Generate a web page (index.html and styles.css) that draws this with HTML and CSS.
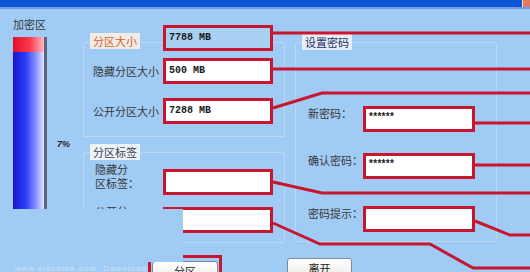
FILE: index.html
```html
<!DOCTYPE html>
<html lang="zh-CN">
<head>
    <meta charset="UTF-8">
    <meta name="viewport" content="width=device-width, initial-scale=1.0">
    <title>加密分区</title>
    <link rel="stylesheet" href="styles.css">
</head>
<body>
    <div class="titlebar"><span class="close"></span></div>

    <div class="main">
        <div class="side">
            <div class="side-label">加密区</div>
            <div class="meter-row">
                <div class="meter"><div class="meter-used"></div></div>
                <div class="percent">7%</div>
            </div>
        </div>

        <div class="mid">
            <div class="group g-size">
                <div class="row head">
                    <div class="cell"><span class="legend legend-size">分区大小</span></div>
                    <div class="mark"><div class="field field-off">7788 MB</div></div>
                </div>
                <div class="row r1">
                    <span class="row-label">隐藏分区大小</span>
                    <div class="mark"><div class="field">500 MB</div></div>
                </div>
                <div class="row r2">
                    <span class="row-label">公开分区大小</span>
                    <div class="mark"><div class="field">7288 MB</div></div>
                </div>
            </div>

            <div class="group g-label">
                <div class="row head">
                    <div class="cell"><span class="legend legend-tag">分区标签</span></div>
                </div>
                <div class="row tag-row">
                    <span class="row-label tag-label">隐藏分<br>区标签：</span>
                    <div class="mark tag-mark"><div class="field"></div></div>
                </div>
                <div class="row tag-row t2">
                    <span class="row-label tag-label">公开分</span>
                    <div class="mark"><div class="field"></div></div>
                </div>
            </div>
        </div>

        <div class="right">
            <div class="group g-pass">
                <div class="row head">
                    <div class="cell"><span class="legend legend-pass">设置密码</span></div>
                </div>
                <div class="row pass-row p1">
                    <span class="pass-label">新密码：</span>
                    <div class="mark"><div class="field pw">******</div></div>
                </div>
                <div class="row pass-row p2">
                    <span class="pass-label">确认密码：</span>
                    <div class="mark"><div class="field pw">******</div></div>
                </div>
                <div class="row pass-row p3">
                    <span class="pass-label">密码提示：</span>
                    <div class="mark"><div class="field pw"></div></div>
                </div>
            </div>
        </div>
    </div>

    <div class="actions">
        <div class="watermark">www.xiazaiba.com &nbsp;Downloads</div>
        <div class="btn-mark"><button class="btn">分区</button></div>
        <button class="btn leave">离开</button>
    </div>

    <div class="cover"></div>

    <svg class="marks" width="530" height="272" viewBox="0 0 530 272">
        <g fill="none" stroke="#c8162e" stroke-width="3">
            <polyline points="273,33 530,33"/>
            <polyline points="273,69 530,69"/>
            <polyline points="273,108 322,93 530,93"/>
            <polyline points="475,123 530,123"/>
            <polyline points="475,165 530,165"/>
            <polyline points="273,182 322,193 530,193"/>
            <polyline points="475,221 510,235 530,235"/>
            <polyline points="273,223 320,244 430,244 473,268 530,268"/>
        </g>
    </svg>
</body>
</html>
```

FILE: styles.css
```css
* {
    box-sizing: border-box;
}
body {
    margin: 0;
    width: 530px;
    height: 272px;
    overflow: hidden;
    position: relative;
    background: #a0cbf5;
    font-family: "Noto Sans CJK SC", sans-serif;
    font-size: 11px;
    line-height: 14px;
    color: #383838;
}
.titlebar {
    height: 9px;
    background: #0c56d4;
    border-bottom: 2px solid #6a9ce6;
    display: flex;
    justify-content: flex-end;
}
.close {
    width: 8px;
    height: 7px;
    background: #e07a60;
    border-left: 1px solid #f4d8d0;
}
.main {
    display: flex;
}
.side {
    width: 83px;
    padding: 8px 0 0 13px;
}
.meter-row {
    display: flex;
    margin-top: 6px;
}
.meter {
    width: 34px;
    height: 172px;
    border-right: 3px solid #5c6678;
    background: linear-gradient(to right, #1616d2, #2b3cf6 40%, #8796ff 75%, #e4e6ff);
}
.meter-used {
    height: 15px;
    background: linear-gradient(to right, #e0102c, #ff3a4c 55%, #ffb8c2);
}
.percent {
    margin: 101px 0 0 10px;
    font: italic bold 9px/12px "Liberation Sans", sans-serif;
    color: #202020;
}
.mid {
    width: 202px;
    padding-top: 33px;
}
.right {
    width: 202px;
    margin-left: 10px;
    padding-top: 33px;
}
.group {
    border: 1px solid #bfd8f2;
    border-radius: 3px;
}
.g-size {
    padding-bottom: 12px;
}
.g-label {
    margin-top: 15px;
    padding-bottom: 9px;
}
.g-pass {
    padding-bottom: 9px;
}
.row {
    display: flex;
    align-items: center;
}
.head {
    margin-top: -8px;
}
.g-size .head {
    margin-top: -18px;
}
.cell {
    width: 79px;
    padding-left: 6px;
}
.g-size .head .cell {
    align-self: flex-end;
    margin-bottom: 3px;
}
.legend {
    padding: 0 3px;
}
.legend-size {
    background: #f3ece6;
    color: #d0642e;
}
.legend-tag {
    background: #eef3f9;
    color: #3a4256;
}
.legend-pass {
    background: #e9eef6;
    color: #24306a;
}
.row-label {
    width: 79px;
    padding-left: 9px;
    white-space: nowrap;
}
.r1 {
    margin-top: 7px;
}
.r2 {
    margin-top: 14px;
}
.mark {
    border: 3px solid #c8162e;
}
.field {
    width: 104px;
    height: 20px;
    background: #fff;
    padding-left: 3px;
    font: bold 10px/20px "Liberation Mono", monospace;
    color: #1a1a1a;
}
.field-off {
    background: #a9cff3;
}
.tag-row {
    align-items: flex-start;
}
.tag-label {
    padding-left: 11px;
    margin-top: 3px;
}
.tag-mark {
    margin-top: 10px;
}
.t2 {
    margin-top: 12px;
}
.t2 .tag-label {
    margin-top: -3px;
}
.pass-row {
    align-items: flex-start;
}
.pass-label {
    width: 67px;
    padding-left: 12px;
    white-space: nowrap;
}
.pass-row .field {
    width: 106px;
}
.pw {
    font: bold 10px/12px "Liberation Sans", sans-serif;
    padding-top: 2px;
    letter-spacing: 0.3px;
}
.p1 {
    margin-top: 57px;
}
.p2 {
    margin-top: 21px;
}
.p3 {
    margin-top: 27px;
}
.actions {
    display: flex;
    align-items: flex-start;
    margin-top: 12px;
}
.watermark {
    width: 148px;
    padding-left: 15px;
    margin-top: 9px;
    white-space: nowrap;
    overflow: hidden;
    font: 8px/10px "Liberation Sans", sans-serif;
    letter-spacing: 1px;
    color: #cfe1f4;
}
.btn-mark {
    border: 3px solid #c8162e;
    padding: 3px 1px 0;
}
.btn {
    display: block;
    width: 66px;
    height: 20px;
    padding: 0;
    border: 1px solid #7f8a98;
    border-radius: 3px;
    background: linear-gradient(#ffffff, #ecebe6);
    font-family: "Noto Sans CJK SC", sans-serif;
    font-size: 11px;
    line-height: 13px;
    color: #222;
}
.leave {
    width: 65px;
    margin: 3px 0 0 65px;
    line-height: 15px;
}
.cover {
    position: absolute;
    left: 0;
    top: 209px;
    width: 183px;
    height: 53px;
    background: #a0cbf5;
}
.marks {
    position: absolute;
    left: 0;
    top: 0;
    pointer-events: none;
}
```
